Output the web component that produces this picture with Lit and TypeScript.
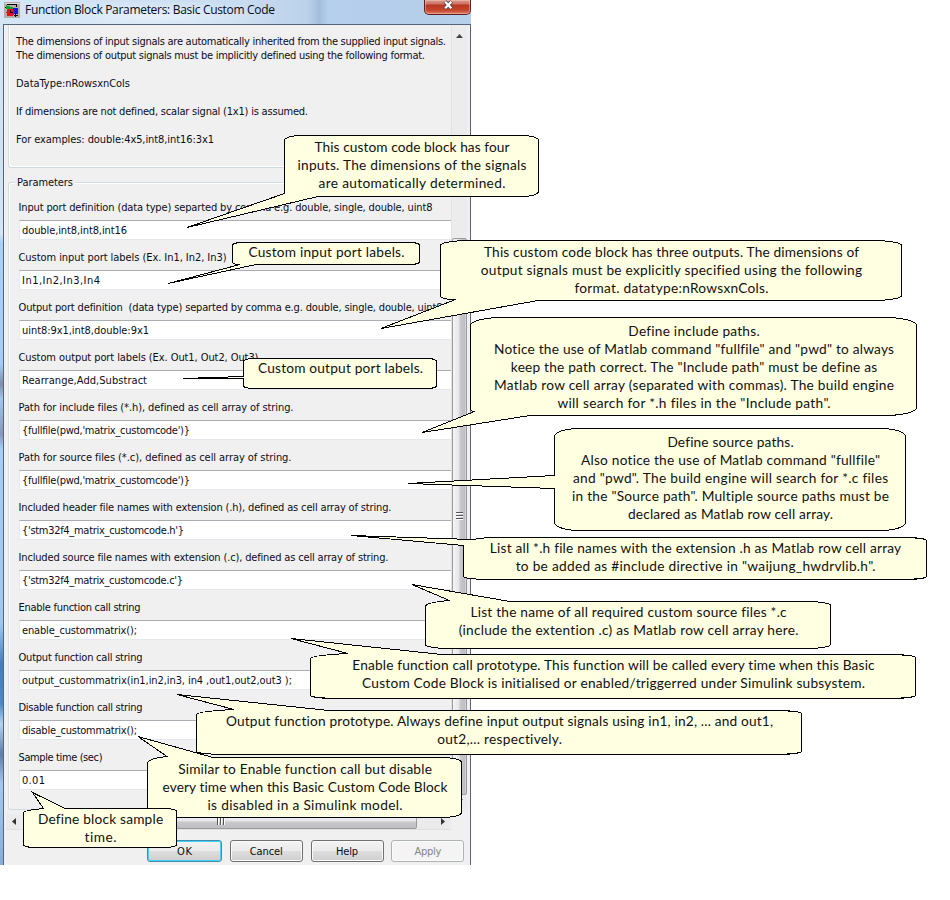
import { LitElement, html, svg, css } from "lit";
import { customElement, property } from "lit/decorators.js";

type Line = [text: string, width: number];
type Pt = [number, number];

interface Callout {
  box: [number, number, number, number];
  rx: number;
  ry: number;
  kind: "bottom" | "top" | "left";
  tip: Pt;
  notch: Pt;
  exit: Pt;
  via?: Pt;
  pad: number;
  lines: Line[];
}

/** A single line of text whose tracking is adjusted to fill a given width. */
@customElement("fit-text")
class FitText extends LitElement {
  @property({ type: Number }) width = 0;
  @property() text = "";

  static styles = css`
    :host { display: inline-block; white-space: pre; }
    .t { display: inline-block; white-space: pre; }
  `;

  render() {
    return html`<span class="t">${this.text}</span>`;
  }

  firstUpdated() {
    const el = this.renderRoot.querySelector(".t") as HTMLElement;
    const n = this.text.length;
    const natural = el.getBoundingClientRect().width;
    const gap = (this.width - natural) / Math.max(1, n - 1);
    el.style.letterSpacing = `${gap.toFixed(3)}px`;
    el.style.marginRight = `${(-gap).toFixed(3)}px`;
  }
}

const fit = ([text, width]: Line) => html`<fit-text .text=${text} .width=${width}></fit-text>`;

const INTRO: Line[] = [
  ["The dimensions of input signals are automatically inherited from the supplied input signals.", 430],
  ["The dimensions of output signals must be implicitly defined using the following format.", 409],
  ["", 0],
  ["DataType:nRowsxnCols", 114],
  ["", 0],
  ["If dimensions are not defined, scalar signal (1x1) is assumed.", 292],
  ["", 0],
  ["For examples: double:4x5,int8,int16:3x1", 198],
];

const FIELDS: [Line, Line][] = [
  [["Input port definition (data type) separted by comma e.g. double, single, double, uint8", 414], ["double,int8,int8,int16", 105]],
  [["Custom input port labels (Ex. In1, In2, In3)", 208], ["In1,In2,In3,In4", 78]],
  [["Output port definition  (data type) separted by comma e.g. double, single, double, uint8", 424], ["uint8:9x1,int8,double:9x1", 127]],
  [["Custom output port labels (Ex. Out1, Out2, Out3)", 240], ["Rearrange,Add,Substract", 125]],
  [["Path for include files (*.h), defined as cell array of string.", 275], ["{fullfile(pwd,'matrix_customcode')}", 168]],
  [["Path for source files (*.c), defined as cell array of string.", 273], ["{fullfile(pwd,'matrix_customcode')}", 168]],
  [["Included header file names with extension (.h), defined as cell array of string.", 373], ["{'stm32f4_matrix_customcode.h'}", 162]],
  [["Included source file names with extension (.c), defined as cell array of string.", 370], ["{'stm32f4_matrix_customcode.c'}", 161]],
  [["Enable function call string", 122], ["enable_custommatrix();", 115]],
  [["Output function call string", 124], ["output_custommatrix(in1,in2,in3, in4 ,out1,out2,out3 );", 270]],
  [["Disable function call string", 124], ["disable_custommatrix();", 115]],
  [["Sample time (sec)", 84], ["0.01", 23]],
];

const CALLOUTS: Callout[] = [
  { box: [284.5, 135.5, 538.5, 196.5], rx: 17, ry: 5, kind: "bottom", tip: [187, 227.5], notch: [284.5, 193.5], exit: [318, 196.5], pad: 3,
    lines: [["This custom code block has four", 195], ["inputs. The dimensions of the signals", 229], ["are automatically determined.", 187]] },
  { box: [232.5, 242.5, 419.5, 264.5], rx: 9, ry: 3, kind: "bottom", tip: [168, 283.5], notch: [240, 264.5], exit: [256, 264.5], pad: 1,
    lines: [["Custom input port labels.", 156]] },
  { box: [440.5, 240.5, 901.5, 300.5], rx: 29, ry: 5, kind: "bottom", tip: [381, 328.5], notch: [455.5, 299.5], exit: [538, 300.5], pad: 3,
    lines: [["This custom code block has three outputs. The dimensions of", 375], ["output signals must be explicitly specified using the following", 381], ["format. datatype:nRowsxnCols.", 194]] },
  { box: [243.5, 358.5, 436.5, 388.5], rx: 10, ry: 3, kind: "left", tip: [183, 378.5], notch: [243.5, 376.5], exit: [243.5, 378.9], pad: 1,
    lines: [["Custom output port labels.", 165]] },
  { box: [470.5, 317.5, 916.5, 415.5], rx: 32, ry: 8, kind: "bottom", tip: [422, 432.5], notch: [474.5, 411.5], exit: [530, 415.5], pad: 5,
    lines: [["Define include paths.", 131], ["Notice the use of Matlab command \"fullfile\" and \"pwd\" to always", 400], ["keep the path correct. The \"Include path\" must be define as", 366], ["Matlab row cell array (separated with commas). The build engine", 400], ["will search for *.h files in the \"Include path\".", 273]] },
  { box: [554.5, 428.5, 905.5, 530.5], rx: 25, ry: 8, kind: "left", tip: [408, 483.5], notch: [554.5, 475.5], exit: [554.5, 488.5], pad: 5,
    lines: [["Define source paths.", 126], ["Also notice the use of Matlab command \"fullfile\"", 299], ["and \"pwd\". The build engine will search for *.c files", 315], ["in the \"Source path\". Multiple source paths must be", 317], ["declared as Matlab row cell array.", 205]] },
  { box: [463.5, 537.5, 926.5, 579.5], rx: 25, ry: 3, kind: "left", tip: [351, 535.5], notch: [488, 537.5], via: [472, 539.5], exit: [463.5, 545.5], pad: 2,
    lines: [["List all *.h file names with the extension .h as Matlab row cell array", 411], ["to be added as #include directive in \"waijung_hwdrvlib.h\".", 360]] },
  { box: [425.5, 601.5, 830.5, 648.5], rx: 23, ry: 4, kind: "top", tip: [412, 584.5], notch: [449.5, 600.5], exit: [510, 601.5], pad: 2,
    lines: [["List the name of all required custom source files *.c", 316], ["(include the extention .c) as Matlab row cell array here.", 340]] },
  { box: [310.5, 654.5, 915.5, 698.5], rx: 31, ry: 3, kind: "top", tip: [291, 638.5], notch: [348, 653.5], exit: [442, 654.5], pad: 2,
    lines: [["Enable function call prototype. This function will be called every time when this Basic", 523], ["Custom Code Block is initialised or enabled/triggerred under Simulink subsystem.", 503]] },
  { box: [196.5, 710.5, 801.5, 754.5], rx: 31, ry: 3, kind: "top", tip: [177, 694.5], notch: [234, 709.5], exit: [329, 710.5], pad: 2,
    lines: [["Output function prototype. Always define input output signals using in1, in2, ... and out1,", 547], ["out2,... respectively.", 125]] },
  { box: [147.5, 757.5, 461.5, 817.5], rx: 20, ry: 5, kind: "top", tip: [138, 736.5], notch: [167, 756.5], exit: [213, 757.5], pad: 3,
    lines: [["Similar to Enable function call but disable", 254], ["every time when this Basic Custom Code Block", 285], ["is disabled in a Simulink model.", 195]] },
  { box: [23.5, 808.5, 176.5, 847.5], rx: 11, ry: 3, kind: "top", tip: [32.5, 792.5], notch: [43.5, 808.5], exit: [65, 808.5], pad: 2,
    lines: [["Define block sample", 125], ["time.", 32]] },
];

function outline(c: Callout): string {
  const [l, t, r, b] = c.box;
  const { rx, ry } = c;
  const p = (q: Pt) => `${q[0]},${q[1]}`;
  const arc = (x: number, y: number) => `A${rx},${ry} 0 0 1 ${x},${y}`;
  const right = `H${r - rx}${arc(r, t + ry)}V${b - ry}${arc(r - rx, b)}`;
  const tl = arc(l + rx, t);
  if (c.kind === "bottom") {
    return `M${l + rx},${t}${right}H${c.exit[0]}L${p(c.tip)}L${p(c.notch)}Q${l},${c.notch[1]} ${l},${b - ry}V${t + ry}${tl}Z`;
  }
  const bl = `H${l + rx}${arc(l, b - ry)}`;
  if (c.kind === "top") {
    return `M${p(c.exit)}${right}${bl}V${t + ry + 1}Q${l},${c.notch[1] + 2} ${p(c.notch)}L${p(c.tip)}Z`;
  }
  if (c.via) {
    return `M${p(c.notch)}${right}${bl}V${c.exit[1]}L${p(c.tip)}L${p(c.via)}Z`;
  }
  return `M${l + rx},${t}${right}${bl}V${c.exit[1]}L${p(c.tip)}L${p(c.notch)}V${t + ry}${tl}Z`;
}

@customElement("note-callout")
class NoteCallout extends LitElement {
  @property({ attribute: false }) data!: Callout;

  static styles = css`
    :host { display: block; }
    .shape { position: absolute; left: 0; top: 0; width: 950px; height: 900px; pointer-events: none; }
    .body { fill: #ffffe1; stroke: #000; stroke-width: 1; shape-rendering: crispEdges; }
    .copy {
      position: absolute; display: flex; flex-direction: column; align-items: center;
      font: 13.7px/18px Lato, "Open Sans", sans-serif; color: #111;
    }
    .line { height: 18px; }
  `;

  render() {
    const c = this.data;
    const [l, t, r] = c.box;
    return html`
      <svg class="shape" viewBox="0 0 950 900">${svg`<path class="body" d=${outline(c)}></path>`}</svg>
      <div class="copy" style="left:${l + 0.5}px;top:${Math.floor(t) + c.pad}px;width:${r - l}px">
        ${c.lines.map((x) => html`<div class="line">${fit(x)}</div>`)}
      </div>`;
  }
}

@customElement("app-root")
class AppRoot extends LitElement {
  static styles = css`
    :host { display: block; position: relative; width: 950px; height: 900px; overflow: hidden; background: #fff; }
    * { box-sizing: border-box; }
    .dialog {
      width: 471px; height: 865px; display: flex; flex-direction: column;
      font: 11px/14px "DejaVu Sans Condensed", "DejaVu Sans", sans-serif; font-stretch: condensed; color: #0c0c18;
    }
    .title {
      height: 24px; display: flex; align-items: flex-start; padding-left: 4px;
      background:
        radial-gradient(ellipse 130px 16px at 150px 16px, #e6f0fa 0, rgba(230, 240, 250, 0) 100%),
        linear-gradient(90deg, #d5e6f6 0, #c8dcf1 240px, #bcd2ea 308px, #a2bedd 319px, #b5cfec 328px, #b6cfeb 100%);
    }
    .icon { display: block; width: 16px; height: 16px; margin-top: 2px; }
    .name { margin-left: 5px; margin-top: 1px; font: 12px/18px "Open Sans", "Noto Sans", sans-serif; color: #0a0a14; }
    .close {
      margin-left: auto; width: 47px; height: 15px; border: 1px solid #5b2025; border-top: 0;
      border-radius: 0 0 5px 5px; display: flex; justify-content: center; padding-left: 2px;
      background: linear-gradient(#d99a8e 0, #cf7163 4px, #b93722 5px, #c4442b 10px, #dc7e62 14px);
      box-shadow: inset 0 0 0 1px rgba(255, 210, 200, 0.45);
    }
    .close svg { width: 13px; height: 11px; }
    .frame { flex: 1; display: flex; min-height: 0; }
    .edge {
      width: 3px;
      background: linear-gradient(#d4e5f5 0, #cfe1f3 130px, #d4e5f4 210px, #a9d1f8 218px, #a3cdf5 340px, #7f8fae 360px, #a3c6ec 375px, #8698bb 410px,
        #a5cdf5 425px, #9ec8f2 600px, #3f7fc0 640px, #4b8aca 680px, #b5d4f2 700px, #5d7ea8 730px, #a4c9ee 760px, #86aeda 100%);
    }
    .client {
      flex: 1; display: flex; flex-direction: column; min-width: 0; background: #f0f0f0;
      border: 1px solid #55657a; border-bottom: 0;
    }
    .scroller { height: 787px; display: flex; }
    .content { width: 447px; padding-left: 4px; }
    .intro {
      height: 143px; padding: 10px 0 0 7px; border-left: 1px solid #d3dbe2; border-bottom: 1px solid #d0d8e0;
      box-shadow: inset 1px -1px #fff; border-bottom-left-radius: 3px;
    }
    .row { height: 14px; }
    .params { position: relative; height: 628px; margin-top: 14px; border: 1px solid #d3dbe2; border-right: 0; box-shadow: inset 1px 1px #fff; border-radius: 3px 0 0 3px; padding: 18px 0 0 10px; }
    .legend { position: absolute; left: 6px; top: -7px; padding: 0 2px; background: #f0f0f0; }
    .field { height: 50px; }
    .label { height: 19px; margin-left: -0.5px; }
    .input {
      height: 20px; background: #fff; padding: 3px 0 0 2px; border: 1px solid #e3e9ef; border-top-color: #abadb3; border-right: 0;
    }
    .vbar { width: 16px; display: flex; flex-direction: column; align-items: center; background: #ececec; border-left: 1px solid #e3e3e3; }
    .vtop { height: 213px; padding-top: 9px; }
    .vthumb {
      width: 15px; height: 557px; border: 1px solid #9a9a9f; border-radius: 2px; display: flex; align-items: center; justify-content: center;
      background: linear-gradient(90deg, #f5f5f5 0, #e6e6e9 45%, #c9c9cd 55%, #bdbdc2 90%, #dedee0 100%);
    }
    .arrow { display: block; }
    .vend { padding-top: 4px; }
    .hbar { margin: 2px 0 0 2px; width: 445px; height: 16px; display: flex; align-items: center; background: #ebebeb; border-bottom: 1px solid #e0e0e0; }
    .hthumb {
      margin-left: 10px; width: 391px; height: 15px; border: 1px solid #9a9a9f; border-radius: 2px; display: flex; align-items: center; justify-content: center;
      background: linear-gradient(#f5f5f5 0, #e6e6e9 45%, #c9c9cd 55%, #bdbdc2 100%);
    }
    .hl { margin-left: 6px; }
    .hr { margin-left: 24px; }
    .actions { margin: 10px 0 0 143px; display: flex; gap: 7.8px; }
    .btn {
      width: 73px; height: 22px; border: 1px solid #707070; border-radius: 3px; display: flex; justify-content: center; padding-top: 4px;
      background: linear-gradient(#f3f3f3 0, #ebebeb 49%, #dddddd 51%, #cfcfcf 100%); box-shadow: inset 0 0 0 1px #fbfbfb;
    }
    .ok { width: 75px; border-color: #3c8fb0; box-shadow: inset 0 0 0 1px #48d0f8; }
    .off { border-color: #adb2b5; background: #f4f4f4; color: #838383; }
    .notes { position: absolute; left: 0; top: 0; width: 950px; height: 900px; }
  `;

  render() {
    return html`
      <div class="dialog">
        <div class="title">
          <svg class="icon" viewBox="0 0 16 16" shape-rendering="crispEdges">
            <rect width="16" height="16" fill="#b4aeaa"></rect>
            <rect x="1" y="1" width="15" height="1" fill="#dcdcdc"></rect>
            <path d="M3 2.500H12.500V5M1 5.500H3" fill="none" stroke="#000"></path>
            <path d="M2 3L10 6L5 10L2 7Z" fill="#12a12c"></path>
            <rect x="9" y="6" width="5" height="6" fill="#1818e0"></rect>
            <circle cx="6.500" cy="10.500" r="4" fill="#e81018"></circle>
            <path d="M6.500 8V10.500H9M11.500 11V15M10 13.500H14" fill="none" stroke="#200"></path>
          </svg>
          <div class="name">${fit(["Function Block Parameters: Basic Custom Code", 250])}</div>
          <div class="close">
            <svg viewBox="0 0 13 11">
              <path d="M3 1.500L9.500 8.500M9.500 1.500L3 8.500" stroke="#4d4a56" stroke-width="4" fill="none"></path>
              <path d="M3.200 1.700L9.300 8.300M9.300 1.700L3.200 8.300" stroke="#fff" stroke-width="2.200" fill="none"></path>
            </svg>
          </div>
        </div>
        <div class="frame">
          <div class="edge"></div>
          <div class="client">
            <div class="scroller">
              <div class="content">
                <div class="intro">${INTRO.map((l) => html`<div class="row">${l[0] ? fit(l) : ""}</div>`)}</div>
                <div class="params">
                  <div class="legend">${fit(["Parameters", 56])}</div>
                  ${FIELDS.map(([label, value]) => html`
                    <div class="field">
                      <div class="label">${fit(label)}</div>
                      <div class="input">${fit(value)}</div>
                    </div>`)}
                </div>
              </div>
              <div class="vbar">
                <div class="vtop"><svg class="arrow" width="7" height="4"><path d="M0 4L3.500 0L7 4Z" fill="#444"></path></svg></div>
                <div class="vthumb">
                  <svg width="7" height="9" shape-rendering="crispEdges"><path d="M0 .5H7M0 3.500H7M0 6.500H7" stroke="#555"></path><path d="M0 1.500H7M0 4.500H7M0 7.500H7" stroke="#fff"></path></svg>
                </div>
                <div class="vend"><svg class="arrow" width="7" height="4"><path d="M0 0L3.500 4L7 0Z" fill="#444"></path></svg></div>
              </div>
            </div>
            <div class="hbar">
              <svg class="hl" width="4" height="7"><path d="M4 0L0 3.500L4 7Z" fill="#333"></path></svg>
              <div class="hthumb">
                <svg width="9" height="7" shape-rendering="crispEdges"><path d="M.5 0V7M3.500 0V7M6.500 0V7" stroke="#555"></path><path d="M1.500 0V7M4.500 0V7M7.500 0V7" stroke="#fff"></path></svg>
              </div>
              <svg class="hr" width="4" height="7"><path d="M0 0L4 3.500L0 7Z" fill="#333"></path></svg>
            </div>
            <div class="actions">
              <div class="btn ok">${fit(["OK", 15])}</div>
              <div class="btn">${fit(["Cancel", 33])}</div>
              <div class="btn">${fit(["Help", 22])}</div>
              <div class="btn off">${fit(["Apply", 27])}</div>
            </div>
          </div>
        </div>
      </div>
      <div class="notes">${CALLOUTS.map((c) => html`<note-callout .data=${c}></note-callout>`)}</div>
    `;
  }
}
